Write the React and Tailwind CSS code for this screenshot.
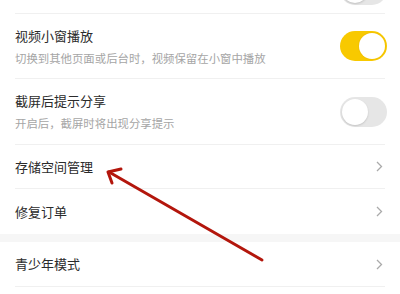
import React from 'react';

const Toggle = ({ on }) => (
  <div
    className={`w-[47px] h-[30px] rounded-full p-[2px] flex items-center shrink-0 ${
      on ? 'bg-[#f8c900] justify-end' : 'bg-[#e6e6e6] justify-start'
    }`}
  >
    <div
      className={`w-[26px] h-[26px] rounded-full bg-white ${
        on ? 'shadow-[0_0_0_1px_#f2c200]' : 'shadow-[0_1px_2px_rgba(0,0,0,0.15)]'
      }`}
    />
  </div>
);

const Chevron = () => (
  <svg width="7" height="11" viewBox="0 0 7 11" className="shrink-0">
    <path d="M1 1 L5.5 5.5 L1 10" fill="none" stroke="#aaa" strokeWidth="1.3" />
  </svg>
);

const Divider = () => <div className="mx-[15px] h-px bg-[#f0f0f0]" />;

const SwitchRow = ({ title, desc, on, h }) => (
  <div className={`flex items-center justify-between pl-[15px] pr-[13px] ${h}`}>
    <div className="flex flex-col gap-[5px]">
      <div className="text-[13px] leading-[18px] text-[#2b2b2b]">{title}</div>
      <div className="text-[11.4px] leading-[16px] text-[#a5a5a5]">{desc}</div>
    </div>
    <Toggle on={on} />
  </div>
);

const LinkRow = ({ title, h }) => (
  <div className={`flex items-center justify-between pl-[15px] pr-[17px] ${h}`}>
    <div className="text-[13px] leading-[18px] text-[#2b2b2b]">{title}</div>
    <Chevron />
  </div>
);

export default function App() {
  return (
    <div
      className="relative w-[400px] h-[294px] overflow-hidden bg-white"
      style={{ fontFamily: '"Noto Sans CJK SC", "Noto Sans", sans-serif' }}
    >
      <div className="h-[13px] overflow-hidden flex items-end justify-end pr-[13px]">
        <div className="mb-[8px]">
          <Toggle on={false} />
        </div>
      </div>
      <Divider />
      <SwitchRow
        title="视频小窗播放"
        desc="切换到其他页面或后台时，视频保留在小窗中播放"
        on
        h="h-[64px]"
      />
      <Divider />
      <SwitchRow
        title="截屏后提示分享"
        desc="开启后，截屏时将出现分享提示"
        on={false}
        h="h-[65px]"
      />
      <Divider />
      <LinkRow title="存储空间管理" h="h-[43px]" />
      <Divider />
      <LinkRow title="修复订单" h="h-[45px]" />
      <div className="h-[8px] bg-[#f6f6f6]" />
      <LinkRow title="青少年模式" h="h-[44px]" />
      <Divider />

      <svg
        className="absolute left-0 top-0 pointer-events-none"
        width="400"
        height="294"
        viewBox="0 0 400 294"
      >
        <g stroke="#b3160c" strokeWidth="3" strokeLinecap="round" fill="none">
          <line x1="262" y1="260" x2="109" y2="172" />
          <polyline points="121,169 108,172 112,183" strokeLinejoin="round" />
        </g>
      </svg>
    </div>
  );
}
